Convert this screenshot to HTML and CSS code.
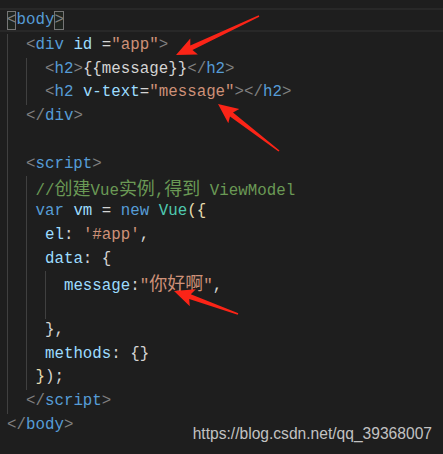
FILE: index.html
```html
<!DOCTYPE html>
<html lang="en">
<head>
  <meta charset="UTF-8">
  <title>Vue v-text</title>
  <link rel="stylesheet" href="styles.css">
</head>
<body>
  <div class="editor">
    <div class="code">
      <div class="ln current"><span class="m">&lt;</span><span class="tag">body</span><span class="m">&gt;</span></div>
      <div class="ln"><span class="g">  </span><span class="p">&lt;</span><span class="tag">div</span> <span class="attr">id</span> <span class="op">=</span><span class="str">"app"</span><span class="p">&gt;</span></div>
      <div class="ln"><span class="g">  </span><span class="g">  </span><span class="p">&lt;</span><span class="tag">h2</span><span class="p">&gt;</span><span class="txt">{{message}}</span><span class="p">&lt;/</span><span class="tag">h2</span><span class="p">&gt;</span></div>
      <div class="ln"><span class="g">  </span><span class="g">  </span><span class="p">&lt;</span><span class="tag">h2</span> <span class="attr">v-text</span><span class="op">=</span><span class="str">"message"</span><span class="p">&gt;&lt;/</span><span class="tag">h2</span><span class="p">&gt;</span></div>
      <div class="ln"><span class="g">  </span><span class="p">&lt;/</span><span class="tag">div</span><span class="p">&gt;</span></div>
      <div class="ln"><span class="g">  </span></div>
      <div class="ln"><span class="g">  </span><span class="p">&lt;</span><span class="tag">script</span><span class="p">&gt;</span></div>
      <div class="ln"><span class="g">  </span><span class="g"> </span><span class="cmt">//<span class="cjk">创建</span>Vue<span class="cjk">实例</span>,<span class="cjk">得到</span> ViewModel</span></div>
      <div class="ln"><span class="g">  </span><span class="g"> </span><span class="kw">var</span> <span class="var">vm</span> <span class="op">=</span> <span class="kw">new</span> <span class="cls">Vue</span><span class="br">({</span></div>
      <div class="ln"><span class="g">  </span><span class="g">  </span><span class="var">el</span><span class="op">:</span> <span class="str">'#app'</span><span class="op">,</span></div>
      <div class="ln"><span class="g">  </span><span class="g">  </span><span class="var">data</span><span class="op">:</span> <span class="op">{</span></div>
      <div class="ln"><span class="g">  </span><span class="g">  </span><span class="g">  </span><span class="var">message</span><span class="op">:</span><span class="str">"<span class="cjk">你好啊</span>"</span><span class="op">,</span></div>
      <div class="ln"><span class="g">  </span><span class="g">  </span><span class="g">  </span></div>
      <div class="ln"><span class="g">  </span><span class="g">  </span><span class="op">},</span></div>
      <div class="ln"><span class="g">  </span><span class="g">  </span><span class="var">methods</span><span class="op">:</span> <span class="op">{}</span></div>
      <div class="ln"><span class="g">  </span><span class="g"> </span><span class="br">}</span><span class="op">);</span></div>
      <div class="ln"><span class="g">  </span><span class="p">&lt;/</span><span class="tag">script</span><span class="p">&gt;</span></div>
      <div class="ln"><span class="p">&lt;/</span><span class="tag">body</span><span class="p">&gt;</span></div>
    </div>

    <!-- red annotation arrows -->
    <svg class="marks" width="443" height="454" viewBox="0 0 443 454">
      <polygon points="258.7,15.3 190.3,45.5 190.3,38.4 176,55 197.9,54.6 192.5,50.1 259.3,16.7"/>
      <polygon points="279.5,150.4 233,112.4 239.3,109.1 218,104 228.3,123.3 230,116.4 278.5,151.6"/>
      <polygon points="238.3,313.2 190.8,294.3 195.8,289.3 174,291 189.8,306.3 189.2,299.1 237.7,314.8"/>
    </svg>

    <div class="watermark">https://blog.csdn.net/qq_39368007</div>
  </div>
</body>
</html>
```

FILE: styles.css
```css
body {
  margin: 0;
  padding: 0;
  background: #1e1e1e;
}
.editor {
  position: relative;
  width: 443px;
  height: 454px;
  overflow: hidden;
  background: #1e1e1e;
}
.code {
  padding: 10px 0 0 7px;
  font-family: 'Liberation Mono', 'Noto Sans CJK SC', monospace;
  font-size: 15.8px;
  color: #d4d4d4;
}
.ln {
  height: 23.75px;
  line-height: 23.75px;
  white-space: pre;
}
/* cursor line: outlined band, text kept on the same baseline grid */
.ln.current {
  margin: -2px 0 2px -7px;
  padding: 2px 0 0 7px;
  box-sizing: border-box;
  border-top: 2px solid #282828;
  border-bottom: 2px solid #282828;
  line-height: 17.75px;
}
.g {
  display: inline-block;
  height: 23.75px;
  vertical-align: top;
  box-shadow: inset 1px 0 0 #404040;
}
.m {
  display: inline-block;
  height: 19px;
  line-height: 19px;
  margin-top: -1px;
  vertical-align: top;
  color: #808080;
  background: #1f241f;
  box-shadow: inset 0 0 0 1px #757575;
}
.p { color: #808080; }
.tag { color: #569cd6; }
.attr { color: #9cdcfe; }
.op { color: #d4d4d4; }
.str { color: #ce9178; }
.txt { color: #d4d4d4; }
.cmt { color: #6a9955; }
.kw { color: #569cd6; }
.var { color: #9cdcfe; }
.cls { color: #4ec9b0; }
.br { color: #e6dcae; }
.cjk {
  font-family: 'Noto Sans CJK SC', sans-serif;
  font-size: 18px;
}
.marks {
  position: absolute;
  left: 0;
  top: 0;
}
.marks polygon {
  fill: #fb2417;
}
.watermark {
  position: absolute;
  right: 11px;
  bottom: 11px;
  font-family: 'Liberation Sans', Arial, sans-serif;
  font-size: 15.6px;
  color: #c2c2c2;
}
```
